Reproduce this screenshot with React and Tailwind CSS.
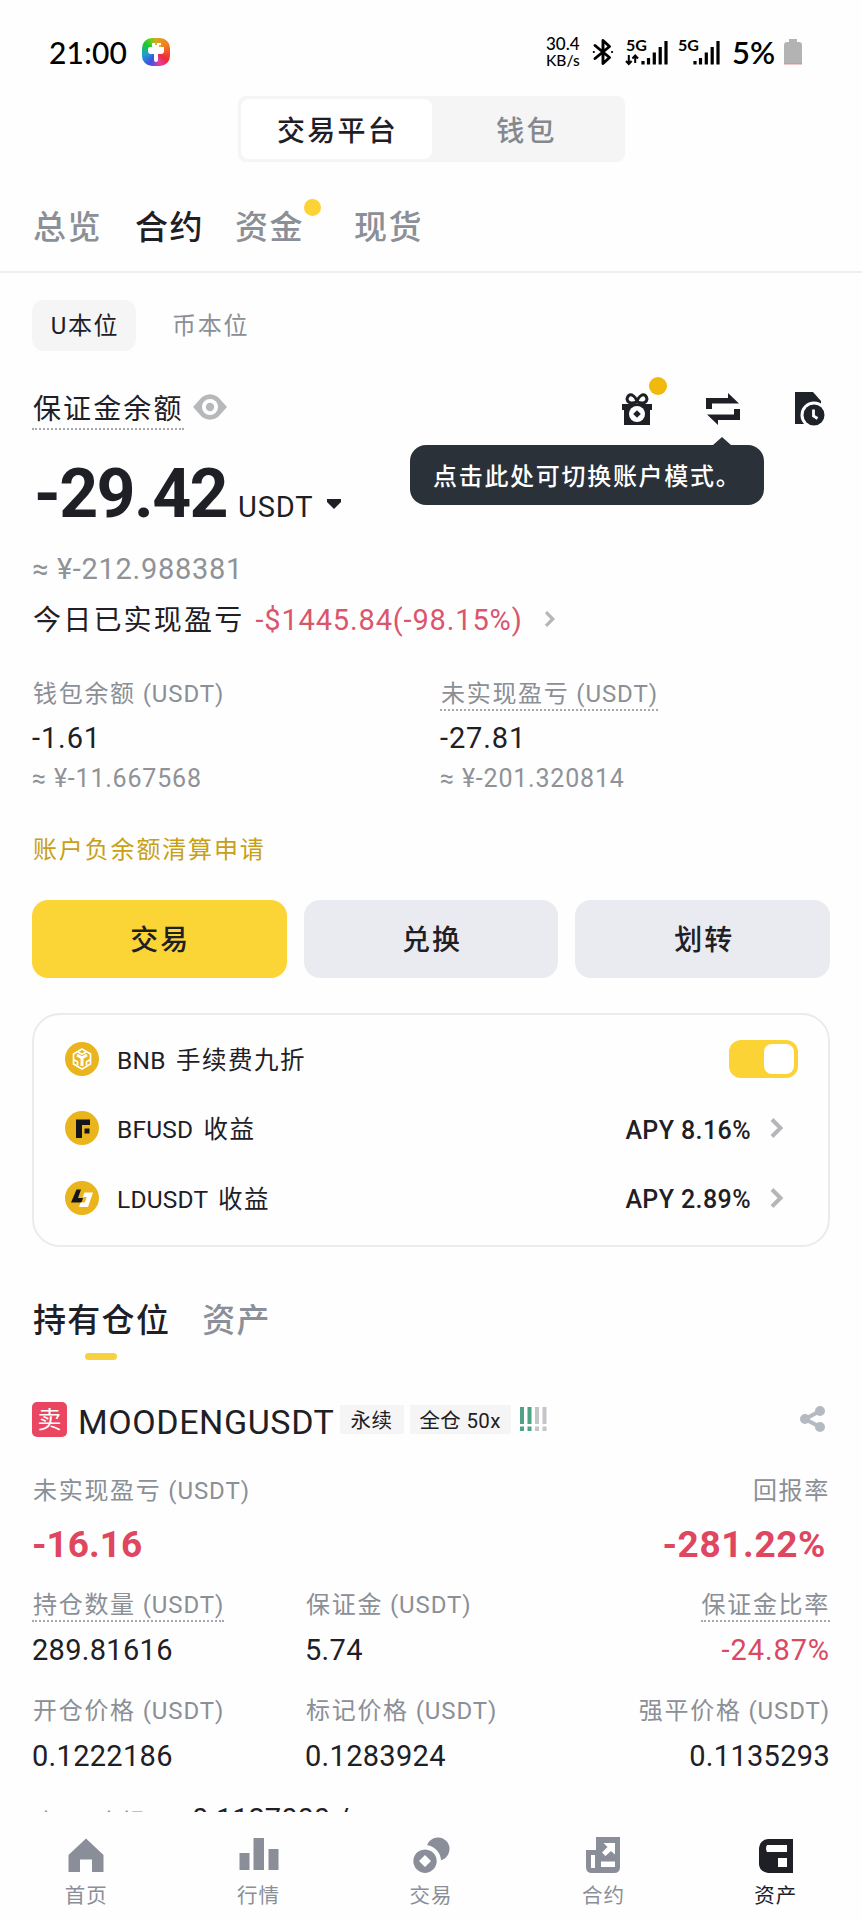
import clsx from 'clsx';

const topTabs = [
  { label: '总览' },
  { label: '合约', active: true },
  { label: '资金', dot: true },
  { label: '现货' },
];

const balances = [
  { label: '钱包余额', value: '-1.61', approx: '≈ ¥-11.667568' },
  { label: '未实现盈亏', value: '-27.81', approx: '≈ ¥-201.320814', dotted: true },
];

const Usdt = () => <span className="tracking-[0.9px]"> (USDT)</span>;

function BluetoothIcon() {
  return (
    <svg width="22" height="28" viewBox="0 0 22 28" fill="none" stroke="#000" strokeWidth="2.9" strokeLinejoin="round" strokeLinecap="round">
      <path d="M3 7.5 L17.5 19.5 L11 25.5 V2.5 L17.5 8.5 L3 20.5" />
      <path d="M1.8 14 h.1 M20 14 h.1" strokeWidth="2.2" />
    </svg>
  );
}

function Signal({ arrows }) {
  return (
    <svg className="overflow-visible" width="44" height="28" viewBox="0 0 44 28">
      <text x="0" y="13" fontSize="15.5" fontWeight="700" fontFamily="Lato, sans-serif" textLength="21" lengthAdjust="spacingAndGlyphs">5G</text>
      {arrows && (
        <g stroke="#000" strokeWidth="2" fill="none">
          <path d="M2.8 17 V26 M0 23 L2.8 26 L5.6 23" />
          <path d="M9.2 25 V17.5 M6.4 20.5 L9.2 17.5 L12 20.5" />
        </g>
      )}
      <path d="M17 23v3.5 M22.5 20v6.5 M28.3 14.5v12 M34.2 9v17.5 M40 3v23.5" stroke="#000" strokeWidth="3.2" />
    </svg>
  );
}

function StatusBar() {
  return (
    <div className="flex h-24 items-center pt-2 pl-[49px] text-black">
      <span className="w-[80px] font-['Lato'] text-[30px] font-medium tracking-[0.2px]">21:00</span>
      <div className="ml-[13px] flex size-7 items-center justify-center rounded-[10px] bg-[conic-gradient(from_0deg,#d8a820,#f08020_15%,#f02838_35%,#e040a0_45%,#4050e0_58%,#20a0d0_72%,#18c830_85%,#60d020_93%,#d8a820)]">
        <svg width="18" height="20" viewBox="0 0 18 20" fill="#fff">
          <path d="M5 1h9v4h3v4q0 3-3 3h-3v6q0 2-2 2t-2-2v-6H4q-3 0-3-3V7q0-2 2-2h2z" />
          <path d="M8 1h2v2H8z M12 3h2v2h-2z" fill="#f5b020" />
        </svg>
      </div>
      <div className="ml-auto flex items-center pr-[60px]">
        <div className="mr-[9px] w-[37px] font-['Lato'] text-[17px] leading-[15.5px] font-medium whitespace-nowrap">
          30.4
          <br />
          <span className="text-[15.5px]">KB/s</span>
        </div>
        <BluetoothIcon />
        <div className="ml-3 flex gap-2">
          <Signal arrows />
          <Signal />
        </div>
        <span className="ml-[10px] w-[48px] font-['Lato'] text-[31px] leading-none font-semibold whitespace-nowrap">5%</span>
        <svg className="ml-[4px]" width="18" height="26" viewBox="0 0 18 26">
          <path d="M5 0h8v3h2q3 0 3 3v18H0V6q0-3 3-3h2z" fill="#b3b3b3" />
          <path d="M0 24h18v1.5H0z" fill="#e0909c" />
        </svg>
      </div>
    </div>
  );
}

function Eye() {
  return (
    <svg width="34" height="26" viewBox="0 0 34 26">
      <path d="M0 13 L9 3 Q17 -2.5 25 3 L34 13 L25 23 Q17 28.5 9 23 Z" fill="#b7b8bb" />
      <circle cx="17" cy="13" r="8" fill="#fff" />
      <circle cx="17" cy="13" r="4.2" fill="#b7b8bb" />
    </svg>
  );
}

function GiftIcon() {
  return (
    <svg width="30" height="33" viewBox="0 0 30 33">
      <path d="M15 9 Q6 12 5 6 Q6 1 10 2 Q14 4 15 9 Q16 4 20 2 Q24 1 25 6 Q24 12 15 9Z" fill="none" stroke="#1e2026" strokeWidth="3" />
      <path d="M0 11h30v6h-2v15H2V17H0z" fill="#1e2026" />
      <circle cx="15" cy="21" r="8" fill="#fff" />
      <path d="M15 17.2l3.8 3.8-3.8 3.8-3.8-3.8z" fill="#1e2026" />
    </svg>
  );
}

function SwapIcon() {
  return (
    <svg width="34" height="32" viewBox="0 0 34 32" fill="#1e2026">
      <path d="M0 5h22V0l11 10.5H6V16H0z" />
      <path d="M34 27H12v5L1 21.5h27V16h6z" />
    </svg>
  );
}

function HistoryIcon() {
  return (
    <svg width="30" height="34" viewBox="0 0 30 34">
      <path d="M0 0h18l8 9v23H0z" fill="#1e2329" />
      <circle cx="19" cy="23" r="13.5" fill="#fff" />
      <circle cx="19" cy="23" r="10.5" fill="#1e2329" />
      <path d="M18.5 17.5v6.5l4 2.5" fill="none" stroke="#fff" strokeWidth="2.8" />
    </svg>
  );
}

function Chevron({ className, width = 14, height = 20 }) {
  return (
    <svg className={className} width={width} height={height} viewBox="0 0 14 20" fill="none" stroke="#b5b6b9" strokeWidth="4">
      <path d="M2 1.5 L10.5 10 L2 18.5" />
    </svg>
  );
}

function CoinIcon({ type }) {
  return (
    <svg width="34" height="34" viewBox="0 0 34 34">
      <circle cx="17" cy="17" r="17" fill="#eab41c" />
      {type === 'bnb' && (
        <g fill="none" stroke="#fff" strokeWidth="1.7">
          <path d="M17 7l8.5 4.9v10.2L17 27l-8.5-4.9V11.9z" />
          <path d="M12 13l5 3 5-3M17 16v8" strokeWidth="3" />
          <path d="M8.5 17.5l4 2.2v3.5 M25.5 17.5l-4 2.2v3.5 M13 10l4 2.2 4-2.2" />
        </g>
      )}
      {type === 'bfusd' && (
        <path d="M11 8.5h14v5.5h-8v13h-6z M19.5 17.5h5v5h-5z" fill="#14151a" />
      )}
      {type === 'ldusdt' && (
        <>
          <path d="M11.5 8.5h4.5l-3 8.5h5l-1.5 4.5H6z" fill="#14151a" />
          <path d="M19.5 11.5h8.5l-5 14.5h-9l1.6-4.5h4.2l2-5.5h-4z" fill="#fff" />
        </>
      )}
    </svg>
  );
}

function CardRow({ type, name, suffix, children }) {
  return (
    <div className="flex h-[69.5px] items-center">
      <CoinIcon type={type} />
      <span className="ml-[18px] pt-[5px] text-[24.5px] tracking-[1.5px]">
        <span className="mr-[4px] tracking-[0.2px]">{name} </span>
        {suffix}
      </span>
      <div className="ml-auto flex items-center">{children}</div>
    </div>
  );
}

function Label({ children, dotted, unit = true }) {
  return (
    <div
      className={clsx(
        'flex h-8 w-fit items-center border-b-2 pl-px text-[24px] leading-none tracking-[1.7px] whitespace-pre text-[#8b8f96]',
        dotted ? 'border-dotted border-[#a5a8ad]' : 'border-transparent'
      )}
    >
      {children}
      {unit && <Usdt />}
    </div>
  );
}

function Stat({ label, value, unit, dotted, right, red }) {
  return (
    <div className={clsx('flex flex-col', right && 'items-end')}>
      <Label dotted={dotted} unit={unit}>{label}</Label>
      <div
        className={clsx(
          'flex h-[57px] items-center text-[29px] leading-none',
          red ? 'text-[#d9495f]' : 'text-[#1e2026]',
          red ? 'tracking-[0.9px]' : 'tracking-[0.3px]'
        )}
      >
        {value}
      </div>
    </div>
  );
}

const navItems = [
  {
    label: '首页',
    icon: <path d="M20 2.5L37.5 19v17H26V23.5H14V36H2.5V19z" />,
  },
  {
    label: '行情',
    icon: <path d="M.5 17h10v17H.5z M14.5 2h10.5v32H14.5z M29.5 13h10v21h-10z" />,
  },
  {
    label: '交易',
    icon: (
      <>
        <circle cx="27" cy="13" r="11.5" />
        <circle cx="14" cy="25" r="16" fill="#fefefe" />
        <path fillRule="evenodd" d="M14 13.5a11.7 11.7 0 1 0 .01 0z M14 19l6 6-6 6-6-6z" />
      </>
    ),
  },
  {
    label: '合约',
    icon: (
      <>
        <path d="M13 1h24v30q0 6-6 6H9q-6 0-6-6V14h10z" />
        <path d="M8 19h4v13H8z M18 25.5h14v5.5H18z M20.5 7H32v11.5l-4-3.5-5.5 5-3.5-3.5 5.5-5.5z" fill="#fff" />
      </>
    ),
  },
  {
    label: '资产',
    active: true,
    icon: (
      <>
        <path d="M12 3h25v34H12Q3 35 3 28V12Q4 4 12 3z" />
        <path d="M11 9h20v7H11q-2-3.5 0-7z M22 22h9v9h-9z" fill="#fff" />
      </>
    ),
  },
];

function BottomNav() {
  return (
    <nav className="grid h-[108px] grid-cols-5 pt-[24px]">
      {navItems.map((item) => (
        <div
          key={item.label}
          className={clsx('flex flex-col items-center', item.active ? 'text-[#1e2026]' : 'text-[#8a8e99]')}
        >
          <svg width="40" height="38" viewBox="0 0 40 38" fill="currentColor">{item.icon}</svg>
          <span className="mt-[11px] text-[20.5px] leading-[22px] tracking-[1px]">{item.label}</span>
        </div>
      ))}
    </nav>
  );
}

export default function App() {
  return (
    <div className="h-[1920px] w-[862px] overflow-hidden bg-[#fefefe] font-['Roboto','Noto_Sans_CJK_SC',sans-serif] text-[#1e2026]">
      <StatusBar />

      <div className="mx-auto flex h-[66px] w-[387px] rounded-lg bg-[#f5f5f5] p-[3px] text-[28px] font-medium tracking-[2.2px]">
        <div className="flex w-[191px] items-center justify-center rounded-lg bg-white pt-[6px] pl-[3px]">交易平台</div>
        <div className="flex flex-1 items-center justify-center pt-[6px] text-[#85888f]">钱包</div>
      </div>

      <div className="flex h-[111px] items-center gap-[33px] border-b-2 border-[#eeeeef] pt-[22px] pl-[33px] text-[33px] font-medium tracking-[1.5px]">
        {topTabs.map((tab) => (
          <div key={tab.label} className={clsx('relative leading-none', tab.active ? 'text-[#1e2026]' : 'text-[#8b8f96]', tab.dot && 'mr-[17px] -ml-[2px]')}>
            {tab.label}
            {tab.dot && <span className="absolute -top-[12px] left-[69px] size-[17px] rounded-full bg-[#fbd335]" />}
          </div>
        ))}
      </div>

      <main className="h-[1539px] overflow-hidden px-8">
        <div className="mt-[27px] flex h-[51px] items-center text-[24px] tracking-[1.7px]">
          <div className="flex h-full w-[104px] items-center justify-center rounded-xl bg-[#f5f5f5] pt-px pl-[2px]">U本位</div>
          <div className="ml-9 pt-px text-[#8b8f96]">币本位</div>
        </div>

        <div className="mt-[37px] flex h-[42px] items-center">
          <div className="flex h-full items-center border-b-2 border-dotted border-[#a5a8ad] pt-[4px] pl-px text-[28px] leading-none tracking-[2.1px]">
            保证金余额
          </div>
          <div className="-mt-[4px] ml-[9px]"><Eye /></div>
          <div className="mr-[5px] ml-auto flex items-center">
            <div className="relative">
              <GiftIcon />
              <span className="absolute -top-[16px] left-[27px] size-[18px] rounded-full bg-[#f0b90b]" />
            </div>
            <div className="relative ml-[54px]">
              <SwapIcon />
              <div className="absolute top-[44px] -left-[296px] flex h-[68px] w-[354px] flex-col items-center">
                <svg className="ml-[270px] shrink-0" width="18" height="8" viewBox="0 0 18 8">
                  <path d="M9 0l9 8H0z" fill="#2b3139" />
                </svg>
                <div className="flex h-[60px] w-full items-center rounded-2xl bg-[#2b3139] pt-[3px] pl-[23px] text-[24px] leading-none font-medium tracking-[1.7px] whitespace-nowrap text-white">
                  点击此处可切换账户模式。
                </div>
              </div>
            </div>
            <div className="ml-[55px]"><HistoryIcon /></div>
          </div>
        </div>

        <div className="mt-[21px] flex h-[86px] items-center">
          <div className="flex items-baseline leading-none">
            <span className="ml-[2px] text-[68px] font-bold tracking-[-1.6px]">-29.42</span>
            <span className="ml-[11px] text-[29px] tracking-[0.9px]">USDT</span>
            <svg className="ml-[13px] -translate-y-2" width="14" height="10" viewBox="0 0 14 10">
              <path d="M0 0h14v3L7 10 0 3z" fill="#1e2026" />
            </svg>
          </div>
        </div>

        <div className="flex h-[65px] items-center text-[29px] tracking-[0.7px] text-[#8f9297]">≈ ¥-212.988381</div>

        <div className="flex h-9 items-center pl-px text-[28px] leading-none">
          <span className="pt-px tracking-[2.2px]">今日已实现盈亏</span>
          <span className="ml-[11px] text-[29px] tracking-[0.85px] text-[#d9566c]">-$1445.84(-98.15%)</span>
          <Chevron className="-mt-[3px] ml-[21px]" width={12} height={16} />
        </div>

        <div className="mt-[41px] grid grid-cols-[408px_1fr]">
          {balances.map((b) => (
            <div key={b.label}>
              <Label dotted={b.dotted}>{b.label}</Label>
              <div className="flex h-[54px] items-center pt-px text-[29px] leading-none tracking-[0.9px]">{b.value}</div>
              <div className="flex h-6 items-center pt-[2px] text-[25px] leading-none tracking-[0.8px] text-[#8f9297]">{b.approx}</div>
            </div>
          ))}
        </div>

        <div className="mt-[46px] flex h-[30px] items-center pl-px text-[24px] tracking-[1.85px] text-[#c7a016]">账户负余额清算申请</div>

        <div className="mt-[35px] grid h-[78px] grid-cols-3 gap-[17px] text-[28px] font-medium tracking-[2px]">
          <button className="rounded-2xl bg-[#fbd535] pt-[4px] pl-[2px]">交易</button>
          <button className="rounded-2xl bg-[#eaebf0] pt-[4px] pl-[2px]">兑换</button>
          <button className="rounded-2xl bg-[#eaebf0] pt-[4px] pl-[3px]">划转</button>
        </div>

        <div className="mt-[35px] h-[234px] rounded-[28px] border-2 border-[#ebebec] px-[31px] pt-[9px]">
          <CardRow type="bnb" name="BNB" suffix="手续费九折">
            <div className="-mr-px flex h-[38px] w-[69px] items-center justify-end rounded-[12px] bg-[#fbd335] pr-1">
              <div className="size-[30px] rounded-[8px] bg-white" />
            </div>
          </CardRow>
          <CardRow type="bfusd" name="BFUSD" suffix="收益">
            <span className="pt-[4px] text-[25px] font-medium tracking-[0.4px]">APY 8.16%</span>
            <Chevron className="mr-[13px] ml-[19px]" />
          </CardRow>
          <CardRow type="ldusdt" name="LDUSDT" suffix="收益">
            <span className="pt-[4px] text-[25px] font-medium tracking-[0.4px]">APY 2.89%</span>
            <Chevron className="mr-[13px] ml-[19px]" />
          </CardRow>
        </div>

        <div className="mt-[54px] flex gap-[32px] pl-px text-[33px] leading-10 font-medium tracking-[1.3px]">
          <div className="flex flex-col items-center">
            持有仓位
            <span className="mt-[12px] mr-[2px] h-[7px] w-8 rounded-sm bg-[#f7d140]" />
          </div>
          <div className="text-[#8b8f9a]">资产</div>
        </div>

        <div className="mt-[39px] flex h-10 items-center leading-none">
          <div className="flex size-[35px] items-center justify-center rounded-[5px] bg-[#ea4661] pt-[2px] text-[24px] text-white">卖</div>
          <span className="ml-[11px] pt-[5px] text-[34px] tracking-[0.6px]">MOODENGUSDT</span>
          <span className="ml-[5px] flex h-[29px] items-center bg-[#f5f5f5] px-[11px] pt-[4px] text-[20.5px] tracking-[0.5px]">永续</span>
          <span className="ml-[6px] flex h-[29px] items-center bg-[#f5f5f5] px-[10px] pt-[4px] text-[20.5px] tracking-[0.3px]">全仓 50x</span>
          <svg className="ml-[9px]" width="27" height="24" viewBox="0 0 27 24" strokeWidth="4" strokeDasharray="17 2.5 4.5">
            <path d="M2 0v24M9.5 0v24" stroke="#4fa385" />
            <path d="M17 0v24M24.5 0v24" stroke="#c4c5c8" />
          </svg>
          <svg className="mr-[5px] ml-auto" width="25" height="26" viewBox="0 0 25 26" fill="#b4b9c2" stroke="#b4b9c2" strokeWidth="3">
            <path d="M20 5L5 13l15 8" fill="none" strokeWidth="4" />
            <circle cx="20" cy="5" r="3.5" />
            <circle cx="5" cy="13" r="3.5" />
            <circle cx="20" cy="21" r="3.5" />
          </svg>
        </div>

        <div className="mt-[37px] flex justify-between">
          <Label>未实现盈亏</Label>
          <Label unit={false}>回报率</Label>
        </div>
        <div className="flex h-[72px] items-center justify-between text-[37px] leading-none font-bold text-[#df4660]">
          <span>-16.16</span>
          <span className="mr-1 tracking-[0.6px]">-281.22%</span>
        </div>

        <div className="mt-[10px] grid grid-cols-[273px_1fr_auto] gap-y-[17px]">
          <Stat label="持仓数量" value="289.81616" dotted />
          <Stat label="保证金" value="5.74" />
          <Stat label="保证金比率" value="-24.87%" unit={false} dotted right red />
          <Stat label="开仓价格" value="0.1222186" />
          <Stat label="标记价格" value="0.1283924" />
          <Stat label="强平价格" value="0.1135293" right />
        </div>

        {/* next row, mostly hidden behind the bottom nav */}
        <div className="mt-[23px] flex items-start text-[24px] leading-[30px] whitespace-pre">
          <span className="w-[160px] pl-px tracking-[1.7px] text-[#8b8f96]">止盈/止损</span>
          <span className="-mt-[4px] text-[29px]">0.1127000 /</span>
        </div>
      </main>

      <BottomNav />
    </div>
  );
}
